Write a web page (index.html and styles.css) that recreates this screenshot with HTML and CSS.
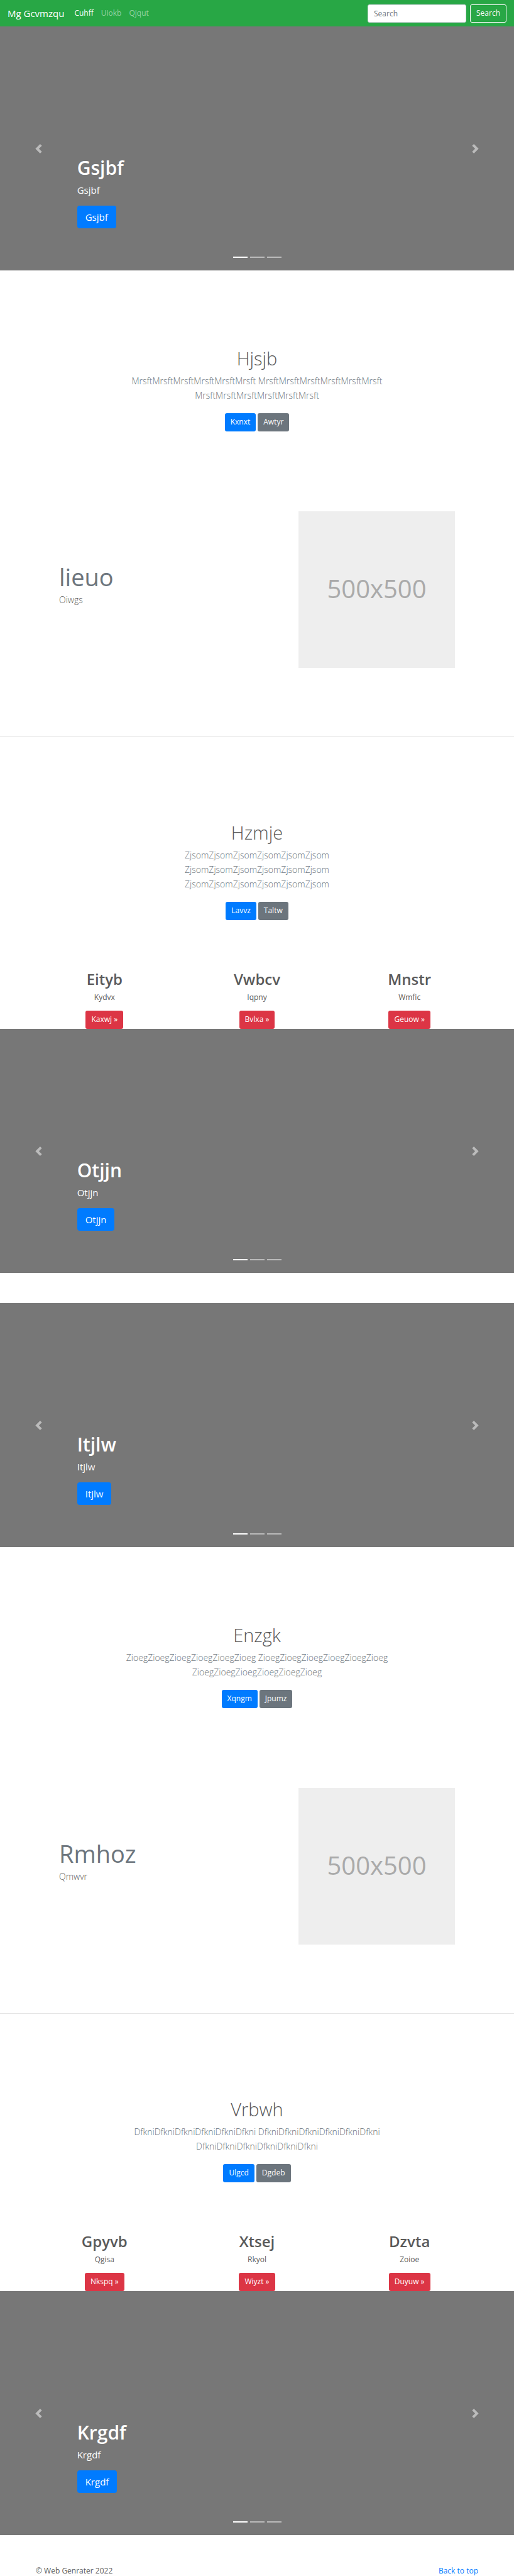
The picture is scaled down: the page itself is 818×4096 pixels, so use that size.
FILE: index.html
```html
<!DOCTYPE html>
<html lang="en">
<head>
<meta charset="utf-8">
<meta name="viewport" content="width=device-width, initial-scale=1">
<title>Mg Gcvmzqu</title>
<link rel="stylesheet" href="styles.css">
</head>
<body>
<header class="navbar" id="top">
  <a class="brand" href="#">Mg Gcvmzqu</a>
  <nav class="nav">
    <a class="nav-link active" href="#">Cuhff</a>
    <a class="nav-link" href="#">Uiokb</a>
    <a class="nav-link" href="#">Qjqut</a>
  </nav>
  <form class="search">
    <input class="search-input" type="search" placeholder="Search" aria-label="Search">
    <button class="search-btn" type="button">Search</button>
  </form>
</header>
<main>
  <section class="carousel">
    <h1 class="carousel-title">Gsjbf</h1>
    <p class="carousel-text">Gsjbf</p>
    <a class="btn btn-lg btn-primary" href="#">Gsjbf</a>
    <button class="control prev" type="button" aria-label="Previous"><svg class="chevron" viewBox="0 0 8 8"><path d="M5.25 0l-4 4 4 4 1.5-1.5-2.5-2.5 2.5-2.5-1.5-1.5z"/></svg></button>
    <button class="control next" type="button" aria-label="Next"><svg class="chevron" viewBox="0 0 8 8"><path d="M2.75 0l-1.5 1.5 2.5 2.5-2.5 2.5 1.5 1.5 4-4-4-4z"/></svg></button>
    <div class="indicators"><span class="dot on"></span><span class="dot"></span><span class="dot"></span></div>
  </section>

  <section class="hero">
    <h2 class="hero-title">Hjsjb</h2>
    <p class="lead">MrsftMrsftMrsftMrsftMrsftMrsft MrsftMrsftMrsftMrsftMrsftMrsft MrsftMrsftMrsftMrsftMrsftMrsft</p>
    <div class="actions"><a class="btn btn-primary" href="#">Kxnxt</a><a class="btn btn-secondary" href="#">Awtyr</a></div>
  </section>

  <section class="feature">
    <div class="feature-body">
      <h2 class="feature-title">lieuo</h2>
      <p class="feature-text">Oiwgs</p>
    </div>
    <div class="placeholder">500x500</div>
  </section>

  <section class="hero ruled">
    <h2 class="hero-title">Hzmje</h2>
    <p class="lead narrow">ZjsomZjsomZjsomZjsomZjsomZjsom ZjsomZjsomZjsomZjsomZjsomZjsom ZjsomZjsomZjsomZjsomZjsomZjsom</p>
    <div class="actions"><a class="btn btn-primary" href="#">Lavvz</a><a class="btn btn-secondary" href="#">Taltw</a></div>
  </section>

  <section class="columns">
    <div class="column"><h2 class="column-title">Eityb</h2><p class="column-text">Kydvx</p><a class="btn btn-danger" href="#">Kaxwj »</a></div>
    <div class="column"><h2 class="column-title">Vwbcv</h2><p class="column-text">Iqpny</p><a class="btn btn-danger" href="#">Bvlxa »</a></div>
    <div class="column"><h2 class="column-title">Mnstr</h2><p class="column-text">Wmfic</p><a class="btn btn-danger" href="#">Geuow »</a></div>
  </section>

  <section class="carousel spaced">
    <h1 class="carousel-title">Otjjn</h1>
    <p class="carousel-text">Otjjn</p>
    <a class="btn btn-lg btn-primary" href="#">Otjjn</a>
    <button class="control prev" type="button" aria-label="Previous"><svg class="chevron" viewBox="0 0 8 8"><path d="M5.25 0l-4 4 4 4 1.5-1.5-2.5-2.5 2.5-2.5-1.5-1.5z"/></svg></button>
    <button class="control next" type="button" aria-label="Next"><svg class="chevron" viewBox="0 0 8 8"><path d="M2.75 0l-1.5 1.5 2.5 2.5-2.5 2.5 1.5 1.5 4-4-4-4z"/></svg></button>
    <div class="indicators"><span class="dot on"></span><span class="dot"></span><span class="dot"></span></div>
  </section>

  <section class="carousel">
    <h1 class="carousel-title">Itjlw</h1>
    <p class="carousel-text">Itjlw</p>
    <a class="btn btn-lg btn-primary" href="#">Itjlw</a>
    <button class="control prev" type="button" aria-label="Previous"><svg class="chevron" viewBox="0 0 8 8"><path d="M5.25 0l-4 4 4 4 1.5-1.5-2.5-2.5 2.5-2.5-1.5-1.5z"/></svg></button>
    <button class="control next" type="button" aria-label="Next"><svg class="chevron" viewBox="0 0 8 8"><path d="M2.75 0l-1.5 1.5 2.5 2.5-2.5 2.5 1.5 1.5 4-4-4-4z"/></svg></button>
    <div class="indicators"><span class="dot on"></span><span class="dot"></span><span class="dot"></span></div>
  </section>

  <section class="hero">
    <h2 class="hero-title">Enzgk</h2>
    <p class="lead">ZioegZioegZioegZioegZioegZioeg ZioegZioegZioegZioegZioegZioeg ZioegZioegZioegZioegZioegZioeg</p>
    <div class="actions"><a class="btn btn-primary" href="#">Xqngm</a><a class="btn btn-secondary" href="#">Jpumz</a></div>
  </section>

  <section class="feature">
    <div class="feature-body">
      <h2 class="feature-title">Rmhoz</h2>
      <p class="feature-text">Qmwvr</p>
    </div>
    <div class="placeholder">500x500</div>
  </section>

  <section class="hero ruled">
    <h2 class="hero-title">Vrbwh</h2>
    <p class="lead">DfkniDfkniDfkniDfkniDfkniDfkni DfkniDfkniDfkniDfkniDfkniDfkni DfkniDfkniDfkniDfkniDfkniDfkni</p>
    <div class="actions"><a class="btn btn-primary" href="#">Ulgcd</a><a class="btn btn-secondary" href="#">Dgdeb</a></div>
  </section>

  <section class="columns">
    <div class="column"><h2 class="column-title">Gpyvb</h2><p class="column-text">Qgisa</p><a class="btn btn-danger" href="#">Nkspq »</a></div>
    <div class="column"><h2 class="column-title">Xtsej</h2><p class="column-text">Rkyol</p><a class="btn btn-danger" href="#">Wiyzt »</a></div>
    <div class="column"><h2 class="column-title">Dzvta</h2><p class="column-text">Zoioe</p><a class="btn btn-danger" href="#">Duyuw »</a></div>
  </section>

  <section class="carousel spaced">
    <h1 class="carousel-title">Krgdf</h1>
    <p class="carousel-text">Krgdf</p>
    <a class="btn btn-lg btn-primary" href="#">Krgdf</a>
    <button class="control prev" type="button" aria-label="Previous"><svg class="chevron" viewBox="0 0 8 8"><path d="M5.25 0l-4 4 4 4 1.5-1.5-2.5-2.5 2.5-2.5-1.5-1.5z"/></svg></button>
    <button class="control next" type="button" aria-label="Next"><svg class="chevron" viewBox="0 0 8 8"><path d="M2.75 0l-1.5 1.5 2.5 2.5-2.5 2.5 1.5 1.5 4-4-4-4z"/></svg></button>
    <div class="indicators"><span class="dot on"></span><span class="dot"></span><span class="dot"></span></div>
  </section>
</main>
<footer class="footer">
  <span>© Web Genrater 2022</span>
  <a class="footer-link" href="#top">Back to top</a>
</footer>
</body>
</html>
```

FILE: styles.css
```css
* { box-sizing: border-box; }

body {
  margin: 0;
  background: #fff;
  color: #5a5a5a;
  font-family: "Open Sans", "Noto Sans", sans-serif;
  font-size: 12px;
  line-height: 18px;
}

h1, h2, p { margin: 0; }
a { text-decoration: none; }

/* Navigation */
.navbar {
  display: flex;
  align-items: center;
  height: 42px;
  padding: 0 12px;
  background: #28a745;
}
.brand { color: #fff; font-size: 15px; margin-right: 10px; }
.nav { display: flex; flex: 1; }
.nav-link { padding: 6px; color: rgba(255, 255, 255, .5); }
.nav-link.active { color: #fff; }
.search { display: flex; gap: 6px; }
.search-input {
  width: 157px;
  height: 29px;
  padding: 0 9px;
  border: 1px solid #ced4da;
  border-radius: 3px;
  background: #fff;
  color: #495057;
  font: inherit;
}
.search-input::placeholder { color: #6c757d; opacity: 1; }
.search-btn {
  height: 29px;
  padding: 0 9px;
  border: 1px solid #f8f9fa;
  border-radius: 3px;
  background: transparent;
  color: #f8f9fa;
  font: inherit;
}

/* Buttons */
.btn {
  display: inline-block;
  padding: 5px 9px 6px;
  border-radius: 3px;
  color: #fff;
  line-height: 18px;
}
.btn-lg { padding: 7px 13px; border-radius: 4px; font-size: 15px; line-height: 22px; }
.btn-primary { background: #007bff; }
.btn-secondary { background: #6c757d; }
.btn-danger { background: #dc3545; }

/* Carousel */
.carousel {
  position: relative;
  display: flex;
  flex-direction: column;
  align-items: flex-start;
  justify-content: flex-end;
  height: 388px;
  padding: 0 15% 67px;
  background: #777;
  color: #fff;
}
.carousel.spaced { margin-bottom: 48px; }
.carousel-title { font-size: 30px; font-weight: 600; line-height: 36px; margin-bottom: 6px; }
.carousel-text { font-size: 15px; line-height: 22px; margin-bottom: 14px; }
.control {
  position: absolute;
  top: 0;
  bottom: 0;
  width: 15%;
  display: flex;
  align-items: center;
  justify-content: center;
  padding: 0;
  border: 0;
  background: none;
  opacity: .5;
}
.prev { left: 0; }
.next { right: 0; }
.chevron { width: 15px; height: 15px; fill: #fff; }
.indicators {
  position: absolute;
  left: 0;
  right: 0;
  bottom: 20px;
  display: flex;
  justify-content: center;
  gap: 4px;
}
.dot { width: 23px; height: 2px; background: #fff; opacity: .5; }
.dot.on { opacity: 1; }

/* Centered intro */
.hero { padding: 122px 15% 127px; text-align: center; }
.hero.ruled { border-top: 1px solid #e5e5e5; padding-top: 134px; padding-bottom: 79px; }
.hero-title { font-size: 29px; font-weight: 300; line-height: 36px; margin-bottom: 6px; }
.lead { color: #6c757d; font-size: 14px; font-weight: 300; line-height: 23px; margin-bottom: 17px; }
.lead.narrow { padding: 0 15%; }
.actions { display: flex; justify-content: center; gap: 3px; }

/* Feature with image */
.feature {
  display: grid;
  grid-template-columns: 381fr 249fr;
  align-items: center;
  padding: 0 94px 109px;
}
.feature-title { color: #6c757d; font-size: 38px; font-weight: 400; line-height: 38px; margin-bottom: 6px; }
.feature-text { font-size: 14px; font-weight: 300; line-height: 23px; margin-bottom: 12px; }
.placeholder {
  display: flex;
  align-items: center;
  justify-content: center;
  aspect-ratio: 1;
  padding-bottom: 4px;
  background: #eee;
  color: #aaa;
  font-size: 40px;
}

/* Three columns */
.columns {
  display: grid;
  grid-template-columns: repeat(3, 1fr);
  padding: 0 45px;
  text-align: center;
}
.column-title { font-size: 24px; font-weight: 600; line-height: 29px; margin-bottom: 6px; }
.column-text { margin-bottom: 12px; }
.column .btn { vertical-align: top; }

/* Footer */
.footer { display: flex; justify-content: space-between; padding: 0 57px; }
.footer-link { color: #007bff; }
```
